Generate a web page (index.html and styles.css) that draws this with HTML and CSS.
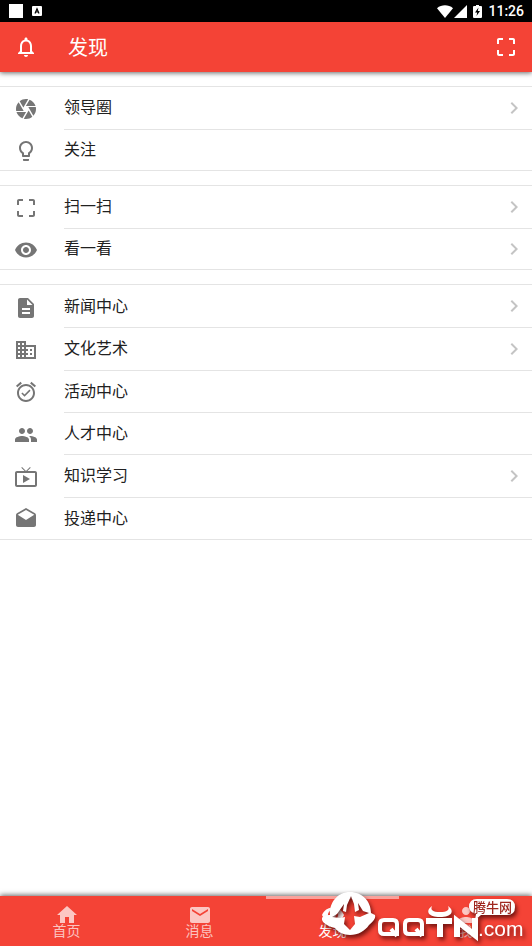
FILE: index.html
```html
<!DOCTYPE html>
<html lang="zh-CN">
<head>
<meta charset="utf-8">
<meta name="viewport" content="width=device-width, initial-scale=1">
<title>发现</title>
<link rel="stylesheet" href="styles.css">
</head>
<body>
<svg class="defs" aria-hidden="true">
  <symbol id="scan" viewBox="0 0 24 24"><path d="M3 5v4h2V5h4V3H5c-1.1 0-2 .9-2 2zm2 10H3v4c0 1.1.9 2 2 2h4v-2H5v-4zm14 4h-4v2h4c1.1 0 2-.9 2-2v-4h-2v4zm0-16h-4v2h4v4h2V5c0-1.1-.9-2-2-2z"/></symbol>
  <symbol id="eye" viewBox="0 0 24 24"><path d="M12 4.5C7 4.5 2.73 7.61 1 12c1.73 4.39 6 7.5 11 7.5s9.27-3.11 11-7.5c-1.73-4.39-6-7.5-11-7.5zM12 17c-2.76 0-5-2.24-5-5s2.24-5 5-5 5 2.24 5 5-2.24 5-5 5zm0-8c-1.66 0-3 1.34-3 3s1.34 3 3 3 3-1.34 3-3-1.34-3-3-3z"/></symbol>
  <symbol id="chevron" viewBox="0 0 24 24"><path d="M10 6 8.59 7.41 13.17 12l-4.58 4.59L10 18l6-6z"/></symbol>
</svg>
<div class="status">
  <span class="square"></span>
  <svg class="badge-a" viewBox="0 0 10 10"><rect width="10" height="10" rx="1" fill="#fff"/><path d="M3 7.5 5 2.800l2 4.700M3.800 6h2.400" fill="none" stroke="#000" stroke-width="1.200"/></svg>
  <span class="spacer"></span>
  <svg class="wifi" viewBox="0 0 16 13"><path d="M0 3.200C4.600-.6 11.400-.6 16 3.200L8 13z"/></svg>
  <svg class="signal" viewBox="0 0 13 13"><path d="M13 0v13H0z"/></svg>
  <svg class="battery" viewBox="0 0 9 13"><path d="M3 0h3v1h2q1 0 1 1v10q0 1-1 1H1q-1 0-1-1V2q0-1 1-1h2z"/><path d="M5.500 2.500 2 7.500h2.200L3.500 11 7 6H4.800z" fill="#000"/></svg>
  <span class="clock">11:26</span>
</div>
<header class="appbar">
  <button class="icon-btn" aria-label="通知"><svg class="icon" viewBox="0 0 24 24"><path d="M12 22c1.100 0 2-.9 2-2h-4c0 1.100.9 2 2 2zm6-6v-5c0-3.070-1.630-5.640-4.500-6.320V4c0-.83-.67-1.500-1.500-1.500s-1.500.67-1.500 1.500v.68C7.640 5.360 6 7.920 6 11v5l-2 2v1h16v-1l-2-2zm-2 1H8v-6c0-2.480 1.510-4.500 4-4.500s4 2.020 4 4.500v6z"/></svg></button>
  <h1 class="title">发现</h1>
  <button class="icon-btn" aria-label="扫一扫"><svg class="icon"><use href="#scan"/></svg></button>
</header>
<main class="content">
  <ul class="group">
    <li class="row"><svg class="icon" viewBox="0 0 24 24"><path d="m9.400 10.500 4.770-8.260C13.470 2.090 12.750 2 12 2c-2.400 0-4.600.85-6.320 2.250l3.660 6.350.06-.1zM21.540 9c-.92-2.920-3.150-5.260-6-6.340L11.880 9h9.660zm.26 1h-7.490l.29.500 4.760 8.250C21 16.970 22 14.610 22 12c0-.69-.07-1.350-.2-2zM8.540 12l-3.900-6.750C3.010 7.030 2 9.390 2 12c0 .69.070 1.350.2 2h7.490l-1.150-2zm-6.080 3c.92 2.920 3.150 5.260 6 6.340L12.120 15H2.460zm11.270 0-3.900 6.760c.7.150 1.420.24 2.170.24 2.400 0 4.600-.85 6.320-2.250l-3.660-6.350-.93 1.600z"/></svg><a class="link" href="#">领导圈<svg class="chevron"><use href="#chevron"/></svg></a></li>
    <li class="row"><svg class="icon" viewBox="0 0 24 24"><path d="M9 21c0 .55.450 1 1 1h4c.55 0 1-.45 1-1v-1H9v1zm3-19C8.140 2 5 5.140 5 9c0 2.380 1.190 4.470 3 5.740V17c0 .55.450 1 1 1h6c.55 0 1-.45 1-1v-2.260c1.810-1.270 3-3.360 3-5.740 0-3.860-3.140-7-7-7zm2.850 11.100-.85.6V16h-4v-2.300l-.85-.6C7.800 12.160 7 10.630 7 9c0-2.760 2.240-5 5-5s5 2.240 5 5c0 1.630-.8 3.160-2.150 4.100z"/></svg><a class="link" href="#">关注</a></li>
  </ul>
  <ul class="group">
    <li class="row"><svg class="icon"><use href="#scan"/></svg><a class="link" href="#">扫一扫<svg class="chevron"><use href="#chevron"/></svg></a></li>
    <li class="row"><svg class="icon"><use href="#eye"/></svg><a class="link" href="#">看一看<svg class="chevron"><use href="#chevron"/></svg></a></li>
  </ul>
  <ul class="group group-centers">
    <li class="row"><svg class="icon" viewBox="0 0 24 24"><path d="M14 2H6c-1.100 0-1.990.9-1.990 2L4 20c0 1.100.89 2 1.990 2H18c1.100 0 2-.9 2-2V8l-6-6zm2 16H8v-2h8v2zm0-4H8v-2h8v2zm-3-5V3.500L18.500 9H13z"/></svg><a class="link" href="#">新闻中心<svg class="chevron"><use href="#chevron"/></svg></a></li>
    <li class="row"><svg class="icon" viewBox="0 0 24 24"><path d="M12 7V3H2v18h20V7H12zM6 19H4v-2h2v2zm0-4H4v-2h2v2zm0-4H4V9h2v2zm0-4H4V5h2v2zm4 12H8v-2h2v2zm0-4H8v-2h2v2zm0-4H8V9h2v2zm0-4H8V5h2v2zm10 12h-8v-2h2v-2h-2v-2h2v-2h-2V9h8v10zm-2-8h-2v2h2v-2zm0 4h-2v2h2v-2z"/></svg><a class="link" href="#">文化艺术<svg class="chevron"><use href="#chevron"/></svg></a></li>
    <li class="row"><svg class="icon" viewBox="0 0 24 24"><path d="m22 5.720-4.600-3.860-1.290 1.530 4.600 3.860L22 5.720zM7.880 3.390 6.600 1.860 2 5.710l1.290 1.530 4.590-3.850zM12 4c-4.970 0-9 4.030-9 9s4.020 9 9 9c4.970 0 9-4.030 9-9s-4.030-9-9-9zm0 16c-3.870 0-7-3.130-7-7s3.130-7 7-7 7 3.130 7 7-3.130 7-7 7zm-1.460-5.470L8.410 12.400l-1.060 1.060 3.180 3.180 6-6-1.060-1.060-4.930 4.950z"/></svg><a class="link" href="#">活动中心</a></li>
    <li class="row"><svg class="icon" viewBox="0 0 24 24"><path d="M16 11c1.660 0 2.990-1.340 2.990-3S17.660 5 16 5c-1.660 0-3 1.340-3 3s1.340 3 3 3zm-8 0c1.660 0 2.990-1.340 2.990-3S9.660 5 8 5C6.340 5 5 6.340 5 8s1.340 3 3 3zm0 2c-2.330 0-7 1.170-7 3.500V19h14v-2.500c0-2.330-4.670-3.500-7-3.500zm8 0c-.29 0-.62.020-.97.050 1.160.84 1.970 1.970 1.970 3.450V19h6v-2.500c0-2.330-4.670-3.500-7-3.500z"/></svg><a class="link" href="#">人才中心</a></li>
    <li class="row"><svg class="icon" viewBox="0 0 24 24"><path d="M21 6h-7.590l3.290-3.290L16 2l-4 4-4-4-.7.710L10.590 6H3c-1.100 0-2 .89-2 2v12c0 1.100.9 2 2 2h18c1.100 0 2-.9 2-2V8c0-1.110-.9-2-2-2zm0 14H3V8h18v12zM9 10v8l7-4z"/></svg><a class="link" href="#">知识学习<svg class="chevron"><use href="#chevron"/></svg></a></li>
    <li class="row"><svg class="icon" viewBox="0 0 24 24"><path d="M21.990 8c0-.72-.37-1.350-.94-1.700L12 1 2.950 6.300C2.380 6.650 2 7.280 2 8v10c0 1.100.9 2 2 2h16c1.100 0 2-.9 2-2l-.01-10zM12 13 3.740 7.840 12 3l8.260 4.840L12 13z"/></svg><a class="link" href="#">投递中心</a></li>
  </ul>
</main>
<nav class="tabs">
  <a class="tab" href="#"><svg class="icon" viewBox="0 0 24 24"><path d="M10 20v-6h4v6h5v-8h3L12 3 2 12h3v8z"/></svg>首页</a>
  <a class="tab" href="#"><svg class="icon" viewBox="0 0 24 24"><path d="M20 4H4c-1.100 0-1.990.9-1.990 2L2 18c0 1.100.9 2 2 2h16c1.100 0 2-.9 2-2V6c0-1.100-.9-2-2-2zm0 4-8 5-8-5V6l8 5 8-5v2z"/></svg>消息</a>
  <a class="tab active" href="#"><svg class="icon"><use href="#eye"/></svg>发现</a>
  <a class="tab" href="#"><svg class="icon" viewBox="0 0 24 24"><path d="M12 12c2.210 0 4-1.790 4-4s-1.790-4-4-4-4 1.790-4 4 1.790 4 4 4zm0 2c-2.670 0-8 1.340-8 4v2h16v-2c0-2.660-5.330-4-8-4z"/></svg>我</a>
  <svg class="watermark" viewBox="0 0 212 58" role="img" aria-label="腾牛网 QQTN.com">
    <g fill="#fff">
      <path fill-rule="evenodd" d="M30 4C42 4 51 13 51 25l4 2c1 3-2 7-6 10-4 6-11 10-19 10-7 0-12-3-15-7C7 38 1 34 2 30c1-2 5-3 8-3C9 14 18 4 30 4zM31 8l-4 9-1 7-3-1 1-7-7 10-5 3 8 1 5-1-1 7 6 6 5-6-1-8 6 1 9-4-6-2-5-8 1 7-4 2-1-8z"/>
      <path d="M112 18c-7 5-4 11 8 11s15-6 8-11c2 4-1 6-8 6s-10-2-8-6z"/>
      <path d="M157 11h30q8 0 8 8t-8 8h-26l-6 5 1-6q-7-2-7-7 0-8 8-8z"/>
    </g>
    <g fill="none" stroke="#fff" stroke-width="4">
      <path d="M64 32h9q4 0 4 4v10H64q-4 0-4-4v-6q0-4 4-4zM71 41l6 7M89 32h9q4 0 4 4v10H89q-4 0-4-4v-6q0-4 4-4zM96 41l6 7"/>
      <path d="M106 33h26M120 32v17M137 49V33l18 14V30" stroke-width="6"/>
    </g>
    <text class="wm-domain" x="158" y="48">.com</text>
    <text class="wm-name" x="153" y="24">腾牛网</text>
  </svg>
</nav>
</body>
</html>
```

FILE: styles.css
```css
* { box-sizing: border-box; }

body {
  margin: 0;
  min-height: 100vh;
  display: flex;
  flex-direction: column;
  background: #fff;
  color: #212121;
  font-family: Roboto, "Noto Sans CJK SC", sans-serif;
  font-size: 16px;
}

svg { display: block; flex: none; fill: currentColor; }
a { color: inherit; text-decoration: none; }
.defs { position: absolute; width: 0; height: 0; }
.icon { width: 24px; height: 24px; }

.status {
  display: flex;
  align-items: center;
  height: 22px;
  padding: 0 8px 0 9px;
  background: #000;
  color: #fff;
}
.square { width: 14px; height: 14px; background: #fff; }
.badge-a { width: 10px; height: 10px; margin-left: 9px; }
.spacer { flex: 1; }
.wifi { width: 16px; height: 13px; }
.signal { width: 13px; height: 13px; margin-left: 1px; }
.battery { width: 9px; height: 13px; margin: 0 6px; }
.clock { font-size: 14px; font-weight: 500; }

.appbar {
  display: flex;
  align-items: center;
  height: 50px;
  padding: 0 14px;
  background: #f44336;
  color: #fff;
  box-shadow: 0 1px 5px rgba(0, 0, 0, .6);
}
.icon-btn { padding: 0; border: 0; background: none; color: inherit; }
.title {
  flex: 1;
  margin: 0 0 0 30px;
  padding-bottom: 2px;
  font-size: 20px;
  font-weight: 400;
}

.content { flex: 1; padding-top: 14px; }
.group {
  display: grid;
  grid-auto-rows: 1fr;
  min-height: 85px;
  margin: 0 0 14px;
  padding: 0;
  list-style: none;
  border-top: 1px solid #e4e4e4;
  border-bottom: 1px solid #e4e4e4;
}
.group-centers { min-height: 256px; }
.row { display: flex; padding-left: 14px; }
.row > .icon { align-self: center; margin: 3px 26px 0 0; color: #757575; }
.link {
  flex: 1;
  display: flex;
  align-items: center;
  justify-content: space-between;
  padding: 0 6px 3px 0;
}
.row + .row .link { border-top: 1px solid #e4e4e4; }
.chevron { width: 24px; height: 24px; margin-top: 3px; color: #c4c4c4; }

.tabs {
  position: relative;
  display: grid;
  grid-template-columns: repeat(4, 1fr);
  height: 50px;
  background: #f44336;
  color: rgba(255, 255, 255, .7);
  box-shadow: 0 -1px 5px rgba(0, 0, 0, .6);
}
.tab {
  display: flex;
  flex-direction: column;
  align-items: center;
  padding-top: 4px;
  border-top: 3px solid transparent;
  font-size: 14px;
  line-height: 16px;
}
.tab .icon { margin-bottom: -4px; }
.active { color: #fff; border-color: #faa19b; }
.watermark {
  position: absolute;
  right: 0;
  bottom: 0;
  width: 212px;
  height: 58px;
  filter: drop-shadow(2px 3px 2px rgba(60, 0, 0, .7));
}
.wm-domain { font-family: "Liberation Sans", sans-serif; font-size: 21px; fill: #fff; }
.wm-name { font-size: 13px; font-weight: 500; fill: #a02820; }
```
